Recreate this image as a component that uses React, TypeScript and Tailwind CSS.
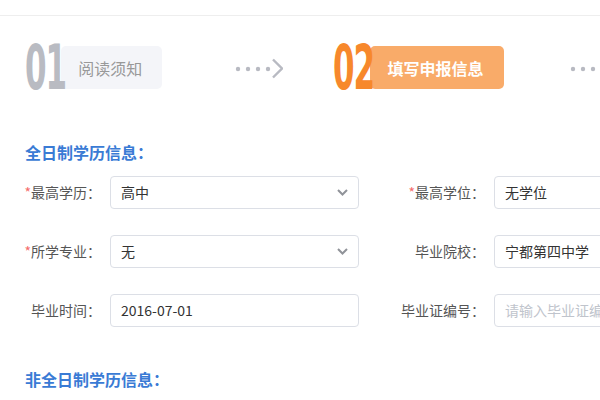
import { ReactNode } from "react";

const CJK = "font-['Microsoft_YaHei','Noto_Sans_CJK_SC',sans-serif]";

function StepArrow() {
  return (
    <svg width="48" height="22" viewBox="0 0 48 22" className="shrink-0">
      <circle cx="3" cy="12" r="2.2" fill="#b8bac2" />
      <circle cx="13" cy="12" r="2.2" fill="#b8bac2" />
      <circle cx="23" cy="12" r="2.2" fill="#b8bac2" />
      <circle cx="33" cy="12" r="2.2" fill="#b8bac2" />
      <polyline
        points="38,2.5 47,11.5 38,20.5"
        fill="none"
        stroke="#b8bac2"
        strokeWidth="2.4"
      />
    </svg>
  );
}

function StepNumber({ n, active }: { n: string; active: boolean }) {
  return (
    <span
      className={`relative z-10 inline-block h-[45px] shrink-0 origin-left scale-x-[0.5] font-['DejaVu_Sans',sans-serif] text-[62px] font-bold leading-[45px] tracking-[-2px] -mr-[46px] ${
        active ? "text-[#f7882c]" : "text-[#b9bbc2]"
      }`}
    >
      {n}
    </span>
  );
}

function Field({
  label,
  required,
  labelWidth,
  children,
}: {
  label: string;
  required?: boolean;
  labelWidth: string;
  children: ReactNode;
}) {
  return (
    <div className="flex shrink-0 items-center">
      <div className={`${labelWidth} shrink-0 whitespace-nowrap text-right text-[14px] text-[#555]`}>
        {required && <span className="text-[#f56c6c]">*</span>}
        {label}：
      </div>
      <div className="ml-[9px] h-[33px] w-[249px] shrink-0">{children}</div>
    </div>
  );
}

function SelectBox({ value }: { value: string }) {
  return (
    <div className="flex h-full items-center justify-between rounded-[4px] border border-[#dcdfe6] bg-white pl-[10px] pr-[10px]">
      <span className="text-[14px] text-[#333]">{value}</span>
      <svg width="11" height="7" viewBox="0 0 11 7">
        <polyline
          points="1,1 5.5,5.5 10,1"
          fill="none"
          stroke="#909399"
          strokeWidth="2"
        />
      </svg>
    </div>
  );
}

function TextBox({ value, placeholder }: { value?: string; placeholder?: string }) {
  return (
    <div className="flex h-full items-center overflow-hidden rounded-[4px] border border-[#dcdfe6] bg-white pl-[10px]">
      {value ? (
        <span className="whitespace-nowrap text-[14px] text-[#333]">{value}</span>
      ) : (
        <span className="whitespace-nowrap text-[14px] text-[#c0c4cc]">{placeholder}</span>
      )}
    </div>
  );
}

export default function App() {
  return (
    <div className={`h-[400px] w-[600px] overflow-hidden bg-white ${CJK}`}>
      <div className="h-[16px] border-b border-[#eeeeee]" />

      <div className="mt-[29px] flex h-[45px] items-center pl-[25px]">
        <StepNumber n="01" active={false} />
        <div className="flex h-[43px] shrink-0 items-center whitespace-nowrap rounded-[5px] bg-[#f4f5f9] pl-[17px] pr-[20px] text-[16px] text-[#999]">
          阅读须知
        </div>
        <div className="ml-[73px] mr-[50px] shrink-0">
          <StepArrow />
        </div>
        <StepNumber n="02" active />
        <div className="flex h-[43px] shrink-0 items-center whitespace-nowrap rounded-[5px] bg-[#f9ab69] pl-[18px] pr-[20px] text-[16px] font-bold text-white">
          填写申报信息
        </div>
        <div className="ml-[66px] shrink-0">
          <StepArrow />
        </div>
      </div>

      <div className="mt-[52px] pl-[25px] text-[16px] font-bold leading-[20px] text-[#3a7bd5]">
        全日制学历信息：
      </div>

      <div className="mt-[14px] flex flex-col gap-[26px]">
        <div className="flex">
          <Field label="最高学历" required labelWidth="w-[101px]">
            <SelectBox value="高中" />
          </Field>
          <Field label="最高学位" required labelWidth="w-[126px]">
            <TextBox value="无学位" />
          </Field>
        </div>
        <div className="flex">
          <Field label="所学专业" required labelWidth="w-[101px]">
            <SelectBox value="无" />
          </Field>
          <Field label="毕业院校" labelWidth="w-[126px]">
            <TextBox value="宁都第四中学" />
          </Field>
        </div>
        <div className="flex">
          <Field label="毕业时间" labelWidth="w-[101px]">
            <TextBox value="2016-07-01" />
          </Field>
          <Field label="毕业证编号" labelWidth="w-[126px]">
            <TextBox placeholder="请输入毕业证编号" />
          </Field>
        </div>
      </div>

      <div className="mt-[42px] pl-[25px] text-[16px] font-bold leading-[20px] text-[#3a7bd5]">
        非全日制学历信息：
      </div>
    </div>
  );
}
